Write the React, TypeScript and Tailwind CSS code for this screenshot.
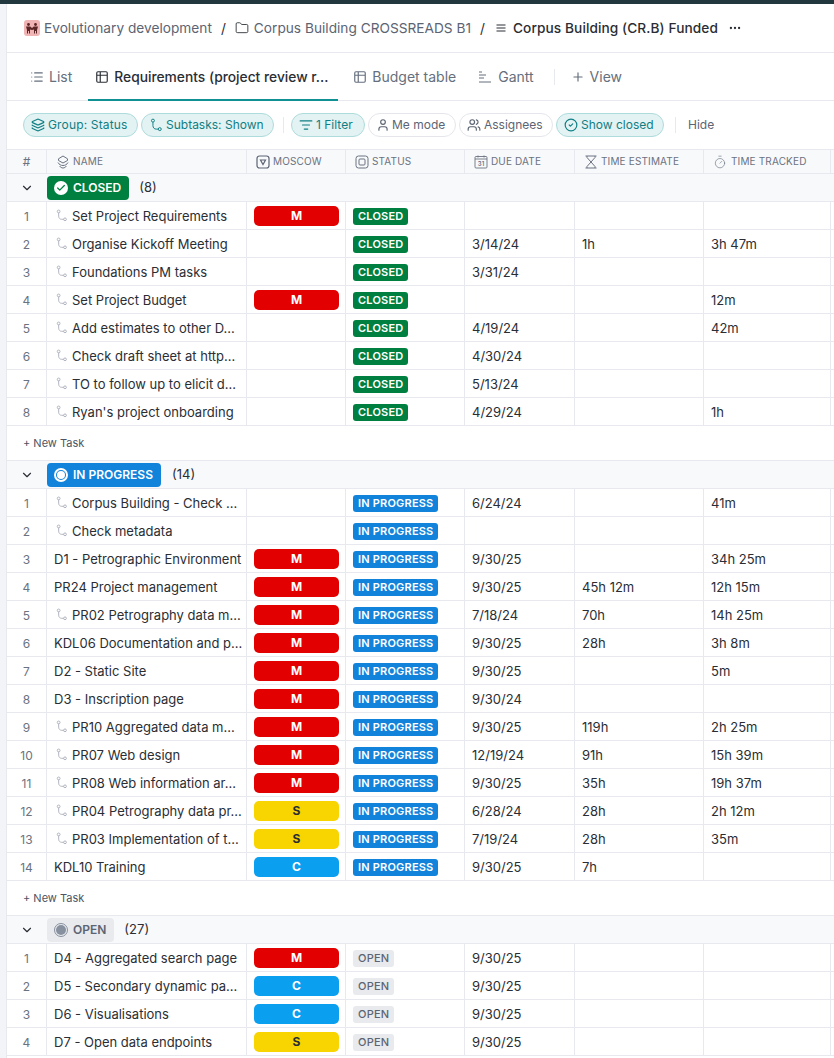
import React from 'react';
import { Layers, ListFilter, User, Users, CircleCheck, Table2, List, Plus, Folder, Ellipsis, Timer, ChevronDown, Check } from 'lucide-react';

type Row = { name: string; sub?: boolean; m?: 'M' | 'S' | 'C'; due?: string; est?: string; tr?: string };

const closed: Row[] = [
  { name: 'Set Project Requirements', sub: true, m: 'M' },
  { name: 'Organise Kickoff Meeting', sub: true, due: '3/14/24', est: '1h', tr: '3h 47m' },
  { name: 'Foundations PM tasks', sub: true, due: '3/31/24' },
  { name: 'Set Project Budget', sub: true, m: 'M', tr: '12m' },
  { name: 'Add estimates to other D...', sub: true, due: '4/19/24', tr: '42m' },
  { name: 'Check draft sheet at http...', sub: true, due: '4/30/24' },
  { name: 'TO to follow up to elicit d...', sub: true, due: '5/13/24' },
  { name: "Ryan's project onboarding", sub: true, due: '4/29/24', tr: '1h' },
];
const progress: Row[] = [
  { name: 'Corpus Building - Check ...', sub: true, due: '6/24/24', tr: '41m' },
  { name: 'Check metadata', sub: true },
  { name: 'D1 - Petrographic Environment', m: 'M', due: '9/30/25', tr: '34h 25m' },
  { name: 'PR24 Project management', m: 'M', due: '9/30/25', est: '45h 12m', tr: '12h 15m' },
  { name: 'PR02 Petrography data m...', sub: true, m: 'M', due: '7/18/24', est: '70h', tr: '14h 25m' },
  { name: 'KDL06 Documentation and p...', m: 'M', due: '9/30/25', est: '28h', tr: '3h 8m' },
  { name: 'D2 - Static Site', m: 'M', due: '9/30/25', tr: '5m' },
  { name: 'D3 - Inscription page', m: 'M', due: '9/30/24' },
  { name: 'PR10 Aggregated data m...', sub: true, m: 'M', due: '9/30/25', est: '119h', tr: '2h 25m' },
  { name: 'PR07 Web design', sub: true, m: 'M', due: '12/19/24', est: '91h', tr: '15h 39m' },
  { name: 'PR08 Web information ar...', sub: true, m: 'M', due: '9/30/25', est: '35h', tr: '19h 37m' },
  { name: 'PR04 Petrography data pr...', sub: true, m: 'S', due: '6/28/24', est: '28h', tr: '2h 12m' },
  { name: 'PR03 Implementation of t...', sub: true, m: 'S', due: '7/19/24', est: '28h', tr: '35m' },
  { name: 'KDL10 Training', m: 'C', due: '9/30/25', est: '7h' },
];
const open: Row[] = [
  { name: 'D4 - Aggregated search page', m: 'M', due: '9/30/25' },
  { name: 'D5 - Secondary dynamic pa...', m: 'C', due: '9/30/25' },
  { name: 'D6 - Visualisations', m: 'C', due: '9/30/25' },
  { name: 'D7 - Open data endpoints', m: 'S', due: '9/30/25' },
];

const cols = 'grid grid-cols-[40px_200px_99px_119px_110px_129px_127px_1fr]';
const cell = 'border-r border-[#e8e9ee] flex items-center min-w-0';

function SubIcon({ className = 'text-[#a9adb8]', size = 16 }: { className?: string; size?: number }) {
  return (
    <svg width={size} height={size} viewBox="0 0 16 16" fill="none" stroke="currentColor" strokeWidth="1.1" className={`shrink-0 ${className}`}>
      <circle cx="4.5" cy="3" r="1.7" />
      <circle cx="12.3" cy="12.7" r="1.7" />
      <path d="M4.5 4.7V8.8C4.5 11 6 12.7 8.2 12.7H10.6" />
    </svg>
  );
}

function Chip({ active, w, gap = 'gap-[3px]', children }: { active?: boolean; w: string; gap?: string; children: React.ReactNode }) {
  return (
    <div className={`h-6 pl-[7px] rounded-full border flex items-center text-[12px] whitespace-nowrap ${gap} ${w} ${active ? 'border-[#aedcdc] bg-[#e3f2f3] text-[#0f7f83]' : 'border-[#e5e6eb] bg-white text-[#5c6473]'}`}>
      {children}
    </div>
  );
}

function Moscow({ v }: { v: 'M' | 'S' | 'C' }) {
  const c = v === 'M' ? 'bg-[#e30000] text-white' : v === 'S' ? 'bg-[#f8d500] text-[#2a2e34]' : 'bg-[#0b9ff0] text-white';
  return <div className={`w-[85px] h-5 mt-px rounded-[5px] flex items-center justify-center text-[12px] font-bold ${c}`}>{v}</div>;
}

function Status({ s }: { s: string }) {
  const c = s === 'CLOSED' ? 'bg-[#008040] text-white font-semibold' : s === 'IN PROGRESS' ? 'bg-[#1283da] text-white font-semibold' : 'bg-[#e8eaed] text-[#5c6473] font-medium';
  return <div className={`h-[17px] mt-px px-[5px] rounded-[3px] flex items-center text-[11px] tracking-[0.2px] ${c}`}>{s}</div>;
}

function TaskRow({ r, i, status }: { r: Row; i: number; status: string }) {
  return (
    <div className={`${cols} h-7 border-b border-[#e8e9ee] text-[13px] text-[#2a2e34]`}>
      <div className={`${cell} justify-center text-[12px] text-[#6b7280]`}><span className="mt-[2px]">{i + 1}</span></div>
      <div className={`${cell} pl-[7px] pr-1 whitespace-nowrap overflow-hidden`}>
        {r.sub && <span className="ml-px w-[17px] shrink-0 flex"><SubIcon size={13} /></span>}
        <span className="mt-[2px]">{r.name}</span>
      </div>
      <div className={`${cell} pl-[7px]`}>{r.m && <Moscow v={r.m} />}</div>
      <div className={`${cell} pl-[7px]`}><Status s={status} /></div>
      <div className={`${cell} pl-[7px]`}><span className="mt-[2px]">{r.due}</span></div>
      <div className={`${cell} pl-[7px]`}><span className="mt-[2px]">{r.est}</span></div>
      <div className={`${cell} pl-[7px]`}><span className="mt-[2px]">{r.tr}</span></div>
      <div />
    </div>
  );
}

function GroupRow({ label, count, pill, icon, gap }: { label: string; count: number; pill: string; icon: React.ReactNode; gap: string }) {
  return (
    <div className="h-7 border-b border-[#e8e9ee] bg-[#f8f9fb] flex items-center">
      <div className="w-10 flex justify-center"><ChevronDown size={14} className="text-[#2a2e34]" /></div>
      <div className={`h-6 rounded-[4px] pl-[7px] pr-2 flex items-center gap-[5px] text-[12px] font-semibold ${pill}`}>
        {icon}
        <span>{label}</span>
      </div>
      <span className={`${gap} text-[13px] text-[#2a2e34]`}>({count})</span>
    </div>
  );
}

function NewTask() {
  return <div className="h-[35px] border-b border-[#e8e9ee] pl-[16px] flex items-center text-[11px] text-[#4b5563]">+ New Task</div>;
}

function Th({ icon, children }: { icon: React.ReactNode; children: React.ReactNode }) {
  return (
    <div className={`${cell} pl-[9px] gap-[3px] text-[10px] tracking-[0.15px] text-[#6b7280] whitespace-nowrap`}>
      {icon}
      <span>{children}</span>
    </div>
  );
}

export default function App() {
  return (
    <div className="w-[834px] h-[1058px] overflow-hidden bg-[#f3f4f8] flex flex-col font-['Inter',sans-serif]">
      <div className="h-1 bg-[#22383f] shrink-0" />
      <div className="flex-1 ml-[6px] bg-white border-l border-[#e8e9ee] flex flex-col min-h-0">
        <div className="h-[49px] shrink-0 border-b border-[#e8e9ee] flex items-center pl-[17px] text-[13.7px] text-[#5c6473] whitespace-nowrap">
          <span className="w-4 h-4 rounded-[3px] bg-[#f0b4b4] flex items-center justify-center mr-1">
            <svg width="14" height="12" viewBox="0 0 14 12" fill="#5a2626"><circle cx="3.5" cy="2.5" r="1.4" /><circle cx="10.5" cy="2.5" r="1.4" /><path d="M1 4.5h4.2L7 6l1.8-1.5H13L12 8v3.5h-1V9H10v2.5H9V7.5L7 8 5 7.5v4H4V9H3v2.5H2V8z" /></svg>
          </span>
          <span className="mt-px">Evolutionary development</span>
          <span className="mx-[9px] mt-px text-[#2a2e34]">/</span>
          <Folder size={14} strokeWidth={1.5} className="text-[#2a2e34] mr-[5px]" />
          <span className="mt-px">Corpus Building CROSSREADS B1</span>
          <span className="mx-[9px] mt-px text-[#2a2e34]">/</span>
          <svg width="14" height="14" viewBox="0 0 14 14" fill="none" stroke="#2a2e34" strokeWidth="1.1" className="mr-[5px]"><path d="M2.5 4h9M2.5 7h9M2.5 10h9" /></svg>
          <span className="mt-px text-[#2a2e34] font-medium tracking-[0.08px]">Corpus Building (CR.B) Funded</span>
          <Ellipsis size={14} className="text-[#2a2e34] ml-[10px]" />
        </div>
        <div className="h-12 shrink-0 border-b border-[#e8e9ee] flex items-stretch pl-[23px] text-[14px] text-[#656f7d] whitespace-nowrap">
          <div className="flex items-center gap-[5px] mr-[16px]"><List size={14} /><span>List</span></div>
          <div className="relative flex items-center gap-[5px] w-[250px] pl-[7px] mr-[15px] text-[#2a2e34] font-medium text-[13.8px]">
            <Table2 size={14} className="shrink-0" />
            <span className="mt-[2px]">Requirements (project review r...</span>
            <div className="absolute left-0 right-0 bottom-[-1px] h-[2px] bg-[#0f9194]" />
          </div>
          <div className="flex items-center gap-[5px] mr-[22px]"><Table2 size={14} /><span>Budget table</span></div>
          <div className="flex items-center gap-[6px] mr-[20px]">
            <svg width="14" height="14" viewBox="0 0 14 14" fill="none" stroke="currentColor" strokeWidth="1"><path d="M1 2h3M1 5h7M1 8h5M1 12h12" /></svg>
            <span>Gantt</span>
          </div>
          <div className="flex items-center"><div className="w-px h-4 bg-[#e8e9ee] mr-4" /><Plus size={14} className="mr-[5px]" /><span>View</span></div>
        </div>
        <div className="h-12 shrink-0 flex items-center pl-4 gap-[3px]">
          <Chip active w="w-[115px]"><Layers size={14} className="shrink-0" /><span className="tracking-[0.15px]">Group: Status</span></Chip>
          <Chip active w="w-[133px]"><SubIcon className="text-[#0f7f83]" size={14} /><span>Subtasks: Shown</span></Chip>
          <div className="w-px h-4 bg-[#e8e9ee] ml-[6px] mr-[4px]" />
          <Chip active w="w-[74px]"><ListFilter size={14} className="shrink-0" /><span>1 Filter</span></Chip>
          <Chip w="w-[88px]" gap="gap-[2px]"><User size={14} className="shrink-0" /><span>Me mode</span></Chip>
          <Chip w="w-[94px]" gap="gap-[3px]"><Users size={14} className="shrink-0" /><span>Assignees</span></Chip>
          <Chip active w="w-[108px]"><CircleCheck size={14} className="shrink-0" /><span>Show closed</span></Chip>
          <div className="w-px h-4 bg-[#e8e9ee] ml-[8px] mr-[9px]" />
          <span className="text-[12px] text-[#5c6473]">Hide</span>
        </div>
        <div className={`${cols} h-[25px] shrink-0 bg-[#f8f9fb] border-b border-t border-[#e8e9ee]`}>
          <div className={`${cell} justify-center text-[12px] text-[#6b7280]`}>#</div>
          <Th icon={<svg width="14" height="14" viewBox="0 0 14 14" fill="none" stroke="#6b7280" strokeWidth="1"><path d="M7 1L11.5 3.8V5.5L7 8 2.5 5.5V3.8z" /><path d="M2 7.5c1 2 3 3 5 3s4-1 5-3" /><path d="M3.5 11c1 1.2 2.2 2 3.5 2s2.5-.8 3.5-2" /></svg>}>NAME</Th>
          <Th icon={<svg width="14" height="14" viewBox="0 0 14 14" fill="none" stroke="#5c6473" strokeWidth="1.2"><rect x="1" y="1" width="12" height="12" rx="2.5" /><path d="M4.5 5h5L7 9.5z" /></svg>}>MOSCOW</Th>
          <Th icon={<svg width="14" height="14" viewBox="0 0 14 14" fill="none" stroke="#6b7280" strokeWidth="1"><rect x="1" y="1" width="12" height="12" rx="2.5" /><rect x="4" y="4" width="6" height="6" rx="1" /></svg>}>STATUS</Th>
          <Th icon={<svg width="14" height="14" viewBox="0 0 14 14" fill="none" stroke="#6b7280" strokeWidth="0.9"><rect x="1" y="1.5" width="12" height="11.5" rx="1" /><path d="M1 4h12M4 .5v2M10 .5v2" /><text x="7" y="11" textAnchor="middle" fontSize="6" fontWeight="600" fill="#6b7280" stroke="none">31</text></svg>}>DUE DATE</Th>
          <Th icon={<svg width="14" height="14" viewBox="0 0 14 14" fill="none" stroke="#6b7280" strokeWidth="1"><path d="M1.5 1h11M1.5 13h11M3 1v1.5L11 11.5V13M11 1v1.5L3 11.5V13" /></svg>}>TIME ESTIMATE</Th>
          <Th icon={<Timer size={14} className="text-[#6b7280] mr-px" strokeWidth={1.1} />}>TIME TRACKED</Th>
          <div />
        </div>
        <GroupRow label="CLOSED" count={8} pill="bg-[#008040] text-white" gap="ml-[10px]" icon={<span className="w-[14px] h-[14px] rounded-full bg-white flex items-center justify-center"><Check size={10} strokeWidth={3} className="text-[#008040]" /></span>} />
        {closed.map((r, i) => <TaskRow key={i} r={r} i={i} status="CLOSED" />)}
        <NewTask />
        <GroupRow label="IN PROGRESS" count={14} pill="bg-[#1283da] text-white" gap="ml-[11px]" icon={<span className="w-[14px] h-[14px] rounded-full border-2 border-white flex items-center justify-center"><span className="w-2 h-2 rounded-full bg-white" /></span>} />
        {progress.map((r, i) => <TaskRow key={i} r={r} i={i} status="IN PROGRESS" />)}
        <NewTask />
        <GroupRow label="OPEN" count={27} pill="bg-[#e8eaed] text-[#5c6473]" gap="ml-[10px]" icon={<span className="w-[14px] h-[14px] rounded-full border border-[#87909e] flex items-center justify-center"><span className="w-[10px] h-[10px] rounded-full bg-[#87909e]" /></span>} />
        {open.map((r, i) => <TaskRow key={i} r={r} i={i} status="OPEN" />)}
      </div>
    </div>
  );
}
